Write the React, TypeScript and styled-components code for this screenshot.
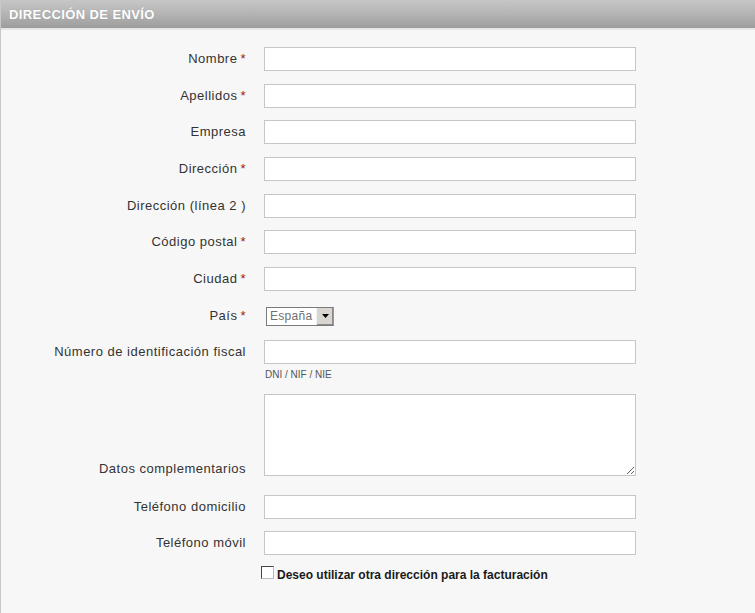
import { FC } from 'react';
import styled, { createGlobalStyle } from 'styled-components';

const GlobalStyle = createGlobalStyle`
  html, body {
    margin: 0;
    padding: 0;
    background: #ffffff;
    overflow: hidden;
  }
  body {
    font-family: "Liberation Sans", Arial, sans-serif;
  }
`;

const Panel = styled.section`
  width: 757px;
  border-left: 1px solid #c8c8c8;
  border-bottom: 1px solid #c8c8c8;
  background: #f7f7f7;
  box-sizing: border-box;
`;

const Header = styled.h2`
  margin: 0;
  height: 28px;
  padding: 0 0 0 8px;
  display: flex;
  align-items: center;
  background: linear-gradient(to bottom, #c6c6c6 0%, #b4b4b4 50%, #9c9c9c 100%);
  border-bottom: 2px solid #e6e6e6;
  color: #ffffff;
  font-size: 13px;
  letter-spacing: 0.4px;
  font-weight: bold;
  text-transform: uppercase;
  text-shadow: 0 0 1px rgba(0, 0, 0, 0.15);
`;

const Form = styled.form`
  display: flex;
  flex-direction: column;
  gap: 12.67px;
  padding: 17px 0 31px;
`;

const Row = styled.div<{ $labelAlign?: 'start' | 'center' | 'end' }>`
  display: grid;
  grid-template-columns: 245px 372px;
  column-gap: 18px;
  align-items: ${p => p.$labelAlign ?? 'center'};
`;

const Label = styled.label<{ $offset?: number }>`
  text-align: right;
  font-size: 13px;
  letter-spacing: 0.5px;
  color: #333333;
  line-height: 24px;
  padding-bottom: ${p => p.$offset ?? 0}px;
`;

const Required = styled.span`
  color: #a01818;
  margin-left: 3px;
`;

const Field = styled.div`
  display: flex;
  flex-direction: column;
`;

const TextInput = styled.input`
  box-sizing: border-box;
  width: 372px;
  height: 24px;
  border: 1px solid #c6c6c6;
  background: #ffffff;
  font-family: inherit;
  font-size: 12px;
  padding: 0 4px;
  outline: none;
`;

const TextArea = styled.textarea`
  box-sizing: border-box;
  width: 372px;
  height: 82px;
  border: 1px solid #c6c6c6;
  background: #ffffff;
  font-family: inherit;
  font-size: 12px;
  margin-bottom: 6px;
  outline: none;
`;

const Hint = styled.span`
  margin-top: 5px;
  font-size: 10px;
  color: #555555;
  padding-left: 1px;
  line-height: 12px;
`;

const SelectBox = styled.div`
  display: inline-flex;
  align-items: stretch;
  width: 68px;
  height: 19px;
  margin-left: 2px;
  box-sizing: border-box;
  border: 1px solid #7a7a7a;
  border-right-color: #9a9a9a;
  background: #ffffff;
`;

const SelectValue = styled.span`
  flex: 1;
  font-size: 12px;
  letter-spacing: 0.3px;
  color: #707070;
  line-height: 17px;
  padding-left: 3px;
`;

const SelectArrow = styled.span`
  width: 16px;
  display: flex;
  align-items: center;
  justify-content: center;
  background: #d8d6cf;
  border-left: 1px solid #f4f4f4;
  box-shadow: inset -1px -1px 0 #8a8a8a;
`;

const CheckRow = styled.label`
  display: flex;
  align-items: center;
  gap: 3px;
  margin-left: 260px;
  font-size: 12px;
  font-weight: bold;
  color: #1a1a1a;
`;

const CheckBox = styled.span`
  width: 13px;
  height: 13px;
  box-sizing: border-box;
  border: 1px solid #444;
  border-right-color: #bbb;
  border-bottom-color: #bbb;
  background: #ffffff;
  margin-top: -4px;
`;

interface FieldDef {
  label: string;
  required?: boolean;
}

const fieldsTop: FieldDef[] = [
  { label: 'Nombre', required: true },
  { label: 'Apellidos', required: true },
  { label: 'Empresa' },
  { label: 'Dirección', required: true },
  { label: 'Dirección (línea 2 )' },
  { label: 'Código postal', required: true },
  { label: 'Ciudad', required: true },
];

const phones: FieldDef[] = [
  { label: 'Teléfono domicilio' },
  { label: 'Teléfono móvil' },
];

const LabelText: FC<FieldDef & { offset?: number }> = ({ label, required, offset }) => (
  <Label $offset={offset}>
    {label}
    {required && <Required>*</Required>}
  </Label>
);

const App: FC = () => (
  <>
    <GlobalStyle />
    <Panel>
      <Header>Dirección de envío</Header>
      <Form>
        {fieldsTop.map(f => (
          <Row key={f.label}>
            <LabelText {...f} />
            <TextInput type="text" />
          </Row>
        ))}
        <Row>
          <LabelText label="País" required />
          <div>
            <SelectBox>
              <SelectValue>España</SelectValue>
              <SelectArrow>
                <svg width="7" height="4" viewBox="0 0 7 4">
                  <path d="M0 0h7L3.5 4z" fill="#000" />
                </svg>
              </SelectArrow>
            </SelectBox>
          </div>
        </Row>
        <Row $labelAlign="start">
          <LabelText label="Número de identificación fiscal" />
          <Field>
            <TextInput type="text" />
            <Hint>DNI / NIF / NIE</Hint>
          </Field>
        </Row>
        <Row $labelAlign="end">
          <LabelText label="Datos complementarios" offset={1} />
          <Field>
            <TextArea />
          </Field>
        </Row>
        {phones.map(f => (
          <Row key={f.label}>
            <LabelText {...f} />
            <TextInput type="text" />
          </Row>
        ))}
        <CheckRow>
          <CheckBox />
          Deseo utilizar otra dirección para la facturación
        </CheckRow>
      </Form>
    </Panel>
  </>
);

export default App;
